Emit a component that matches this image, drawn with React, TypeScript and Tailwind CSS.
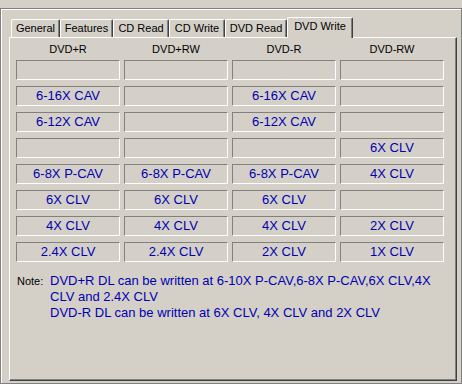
const tabs = [
  { label: 'General', w: 'w-[49px]' },
  { label: 'Features', w: 'w-[53px]' },
  { label: 'CD Read', w: 'w-[56px]' },
  { label: 'CD Write', w: 'w-[56px]' },
  { label: 'DVD Read', w: 'w-[62px]' },
];

const headers = ['DVD+R', 'DVD+RW', 'DVD-R', 'DVD-RW'];

const rows = [
  ['', '', '', ''],
  ['6-16X CAV', '', '6-16X CAV', ''],
  ['6-12X CAV', '', '6-12X CAV', ''],
  ['', '', '', '6X CLV'],
  ['6-8X P-CAV', '6-8X P-CAV', '6-8X P-CAV', '4X CLV'],
  ['6X CLV', '6X CLV', '6X CLV', ''],
  ['4X CLV', '4X CLV', '4X CLV', '2X CLV'],
  ['2.4X CLV', '2.4X CLV', '2X CLV', '1X CLV'],
];

function Cell({ text }: { text: string }) {
  return (
    <div className="h-[20px] border border-t-[#808080] border-l-[#808080] border-r-white border-b-white text-center text-[13px] leading-[18px] text-[#0000b0] whitespace-nowrap">
      {text}
    </div>
  );
}

export default function App() {
  return (
    <div className="w-[462px] h-[384px] bg-[#d4d0c8] pt-[8px] font-['Liberation_Sans',Arial,sans-serif] text-black overflow-hidden">
      <div className="w-[462px] h-[376px] border border-[#808080] shadow-[inset_1px_1px_0_#ffffff] pl-[8px] pt-[8px]">
        {/* tab strip */}
        <div className="flex items-end h-[20px] pl-[2px]">
          {tabs.map((t) => (
            <div
              key={t.label}
              className={`${t.w} h-[18px] border-t border-l border-r border-t-white border-l-white border-r-[#404040] shadow-[inset_-1px_0_0_#808080] rounded-t-[2px] text-center text-[11px] leading-[17px]`}
            >
              {t.label}
            </div>
          ))}
          <div className="relative z-10 w-[66px] h-[21px] -mb-[1px] bg-[#d4d0c8] border-t border-l border-r border-t-white border-l-white border-r-[#404040] shadow-[inset_-1px_0_0_#808080] rounded-t-[2px] text-center text-[11px] leading-[17px]">
            DVD Write
          </div>
        </div>

        {/* tab page */}
        <div className="w-[448px] h-[344px] border-t border-l border-r border-b border-t-white border-l-white border-r-[#404040] border-b-[#404040] shadow-[inset_-1px_-1px_0_#808080] pt-[3px] pl-[6px]">
          <div className="grid grid-cols-[104px_104px_104px_104px] gap-x-[4px] h-[16px] text-[11px] leading-[16px] text-center">
            {headers.map((h) => (
              <div key={h}>{h}</div>
            ))}
          </div>
          <div className="mt-[3px] grid grid-cols-[104px_104px_104px_104px] gap-x-[4px] gap-y-[6px]">
            {rows.map((r, i) => r.map((c, j) => <Cell key={`${i}-${j}`} text={c} />))}
          </div>
          <div className="mt-[11px] flex pl-[1px]">
            <div className="w-[33px] shrink-0 text-[11px] leading-[16px]">Note:</div>
            <div className="w-[394px] text-[13px] leading-[16px] text-[#0000b0]">
              <div>DVD+R DL can be written at 6-10X P-CAV,6-8X P-CAV,6X CLV,4X CLV and 2.4X CLV</div>
              <div>DVD-R DL can be written at 6X CLV, 4X CLV and 2X CLV</div>
            </div>
          </div>
        </div>
      </div>
    </div>
  );
}
